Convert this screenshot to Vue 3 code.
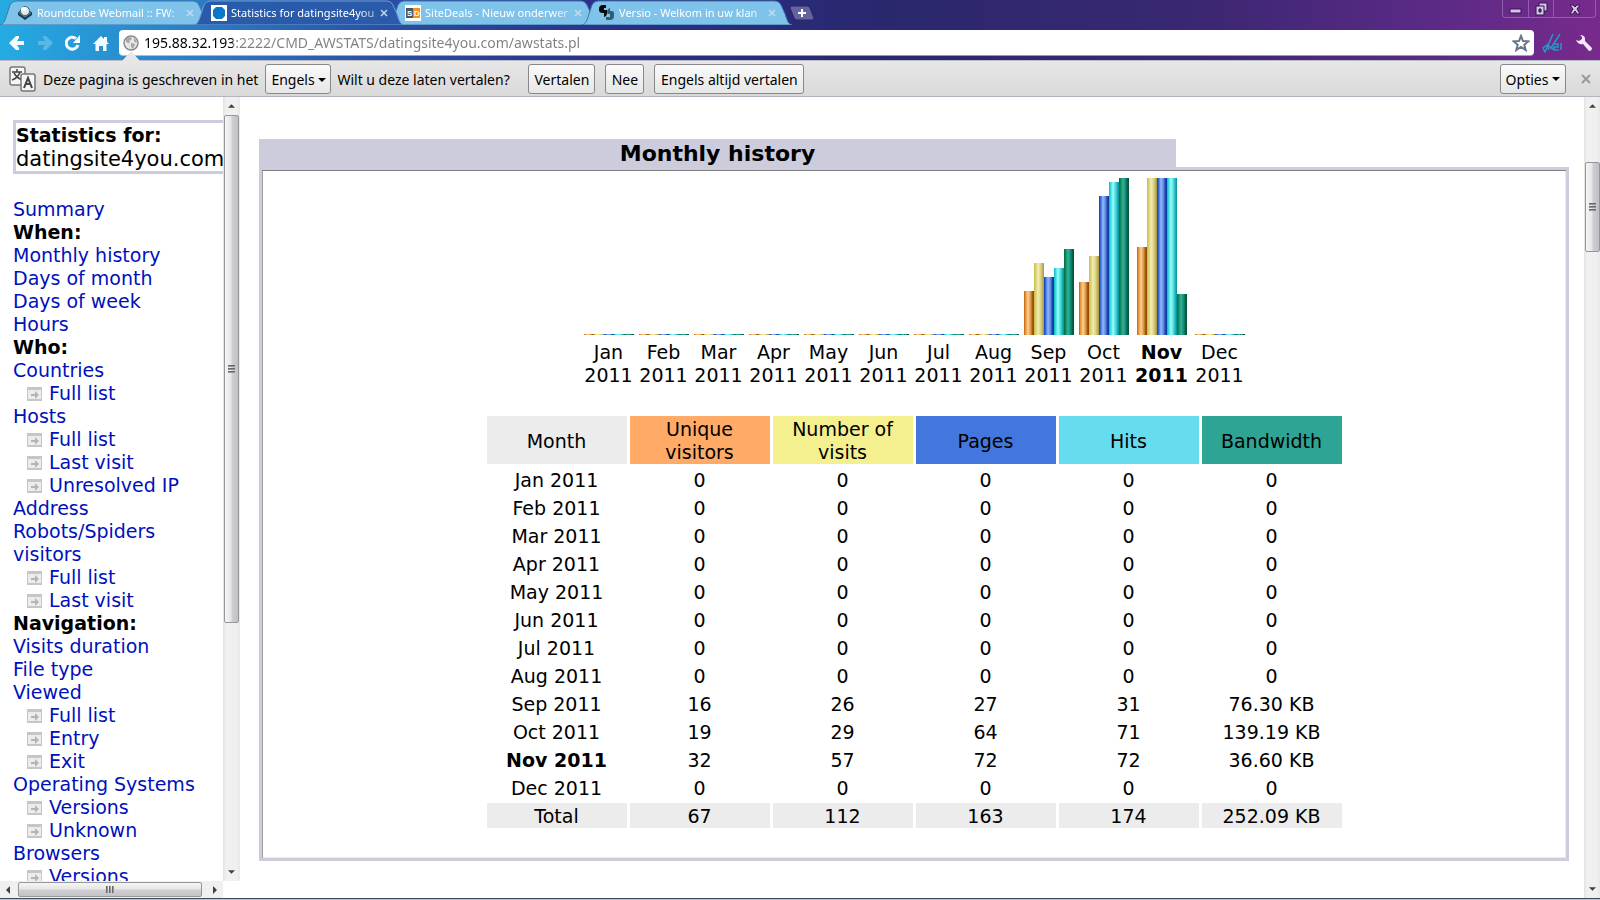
<script setup>
const tabs = [
  { title: 'Roundcube Webmail :: FW:', icon: 'cube' },
  { title: 'Statistics for datingsite4you', icon: 'dot', active: true },
  { title: 'SiteDeals - Nieuw onderwer', icon: 'sd' },
  { title: 'Versio - Welkom in uw klan', icon: 'versio' },
]

const menu = [
  { text: 'Summary' },
  { text: 'When:', head: true },
  { text: 'Monthly history' },
  { text: 'Days of month' },
  { text: 'Days of week' },
  { text: 'Hours' },
  { text: 'Who:', head: true },
  { text: 'Countries' },
  { text: 'Full list', sub: true },
  { text: 'Hosts' },
  { text: 'Full list', sub: true },
  { text: 'Last visit', sub: true },
  { text: 'Unresolved IP Address', sub: true },
  { text: 'Robots/Spiders visitors' },
  { text: 'Full list', sub: true },
  { text: 'Last visit', sub: true },
  { text: 'Navigation:', head: true },
  { text: 'Visits duration' },
  { text: 'File type' },
  { text: 'Viewed' },
  { text: 'Full list', sub: true },
  { text: 'Entry', sub: true },
  { text: 'Exit', sub: true },
  { text: 'Operating Systems' },
  { text: 'Versions', sub: true },
  { text: 'Unknown', sub: true },
  { text: 'Browsers' },
  { text: 'Versions', sub: true },
]

const empty = [0, 0, 0, 0, 0]
const none = [1, 1, 1, 1, 1]
const months = [
  ...['Jan', 'Feb', 'Mar', 'Apr', 'May', 'Jun', 'Jul', 'Aug'].map((name) => ({ name, values: empty, bars: none })),
  { name: 'Sep', values: [16, 26, 27, 31, '76.30 KB'], bars: [44, 72, 58, 67, 86] },
  { name: 'Oct', values: [19, 29, 64, 71, '139.19 KB'], bars: [53, 79, 139, 153, 157] },
  { name: 'Nov', values: [32, 57, 72, 72, '36.60 KB'], bars: [88, 157, 157, 157, 41], current: true },
  { name: 'Dec', values: empty, bars: none },
]
const series = ['visitors', 'visits', 'pages', 'hits', 'bandwidth']
const labels = ['Unique visitors', 'Number of visits', 'Pages', 'Hits', 'Bandwidth']
const totals = [67, 112, 163, 174, '252.09 KB']
</script>

<template>
  <div class="window">
    <header class="chrome">
      <div class="tabstrip">
        <div v-for="tab in tabs" :key="tab.title" class="tab" :class="{ active: tab.active }">
          <svg class="tab-shape" viewBox="0 0 210 25" preserveAspectRatio="none" aria-hidden="true">
            <path d="M0 25C4 24 5 20 7 14L10 5Q12 1 16 1H193Q197 1 199 5L203 14C205 20 206 24 210 25Z" />
          </svg>
          <svg v-if="tab.icon === 'cube'" class="favicon" viewBox="0 0 16 16" aria-hidden="true">
            <path d="M1 8L8 13L15 8V10L8 15L1 10Z" fill="#173a4c" />
            <path d="M1 8L5 5H11L15 8L8 13Z" fill="#4f7f9b" stroke="#1d3d50" />
            <circle cx="8" cy="6" r="4.500" fill="#e4ebef" stroke="#456678" />
            <ellipse cx="7" cy="4" rx="3" ry="2" fill="#fff" />
          </svg>
          <svg v-else-if="tab.icon === 'dot'" class="favicon" viewBox="0 0 16 16" aria-hidden="true">
            <path d="M0 0H16V16H0Z" fill="#fff" />
            <path d="M5 2H11L14 5V11L11 14H5L2 11V5Z" fill="#0878c6" />
          </svg>
          <svg v-else-if="tab.icon === 'sd'" class="favicon" viewBox="0 0 16 16" aria-hidden="true">
            <path d="M0 0H16V16H0Z" fill="#fff" />
            <path d="M1 3H8V13H1Z" fill="#44586c" />
            <path d="M8 3H15V13H8Z" fill="#f7920f" />
            <text x="2" y="11" class="sd">S</text>
            <text x="9" y="11" class="sd">D</text>
          </svg>
          <svg v-else class="favicon" viewBox="0 0 16 16" aria-hidden="true">
            <path d="M7 0H4Q0 0 0 4V5Q0 8 4 8H5V12Q8 11 8 8V5H5V3H7Z" fill="#080a0c" />
            <path d="M11 3Q8 4 8 7Q8 9 10 9H11V12H7V15H11Q15 15 15 11V8Q15 6 12 6H11Z" fill="#2b6170" />
          </svg>
          <a href="#" class="tab-title">{{ tab.title }}</a>
          <button class="tab-close" aria-label="Tabblad sluiten">
            <svg viewBox="0 0 8 8" aria-hidden="true"><path d="M1 1L7 7M7 1L1 7" /></svg>
          </button>
        </div>
        <button class="new-tab" aria-label="Nieuw tabblad">
          <svg viewBox="0 0 26 16" aria-hidden="true">
            <path d="M2 1H18Q20 1 21 3L25 13Q25 15 23 15H8Q6 15 5 13L1 3Q1 1 2 1Z" fill="#6462a0" stroke="#28265f" />
            <path d="M9 8H17M13 4V12" stroke="#fff" stroke-width="2" />
          </svg>
        </button>
        <div class="controls">
          <button aria-label="Minimaliseren">
            <svg viewBox="0 0 14 14" aria-hidden="true"><path d="M1 7H12V11H1Z" fill="#d7c4e4" stroke="#311650" /></svg>
          </button>
          <button aria-label="Vorig formaat">
            <svg viewBox="0 0 14 14" aria-hidden="true">
              <path d="M5 1H13V9H5Z" fill="#d7c4e4" stroke="#311650" />
              <path d="M2 4H10V13H2Z" fill="#d7c4e4" stroke="#311650" />
              <path d="M5 7H7V10H5Z" fill="#5b2a82" stroke="#311650" />
            </svg>
          </button>
          <button class="wide" aria-label="Sluiten">
            <svg viewBox="0 0 14 14" aria-hidden="true">
              <path d="M2 3H5L7 5L9 3H12L9 7L12 12H9L7 9L5 12H2L5 7Z" fill="#d7c4e4" stroke="#311650" />
            </svg>
          </button>
        </div>
      </div>

      <div class="toolbar">
        <button class="tool" aria-label="Terug">
          <svg viewBox="0 0 16 16" aria-hidden="true"><path d="M7 1H10V3L8 6H15V10H8L10 13V15H7L0 8Z" fill="#f4fbff" /></svg>
        </button>
        <button class="tool faded" aria-label="Vooruit">
          <svg viewBox="0 0 16 16" aria-hidden="true"><path d="M9 1H6V3L8 6H1V10H8L6 13V15H9L16 8Z" fill="#f4fbff" /></svg>
        </button>
        <button class="tool" aria-label="Opnieuw laden">
          <svg viewBox="0 0 16 16" aria-hidden="true">
            <path d="M13 10A6 6 0 1 1 11 3.500" fill="none" stroke="#f4fbff" stroke-width="3" />
            <path d="M15 0V8H8Z" fill="#f4fbff" />
          </svg>
        </button>
        <button class="tool" aria-label="Startpagina">
          <svg viewBox="0 0 16 16" aria-hidden="true">
            <path d="M8 1L11 4V2H14V7L16 9H13.500V16H10V11H6V16H2.500V9H0Z" fill="#f4fbff" />
          </svg>
        </button>
        <div class="omnibox">
          <svg class="globe" viewBox="0 0 16 16" aria-hidden="true">
            <circle cx="8" cy="8" r="7" fill="#e6e6e6" stroke="#8b8b8b" stroke-width="1.500" />
            <path d="M3 4L6 2L9 3L8 5L6 6L7 8L5 8L3 7Z M8 8L12 9L11 12L9 14L8 11Z M11 3L14 6L13 8L11 6Z" fill="#a6a6a6" />
          </svg>
          <input type="text" class="url" aria-label="Adresbalk" value="195.88.32.193:2222/CMD_AWSTATS/datingsite4you.com/awstats.pl" />
          <button class="star" aria-label="Bladwijzer toevoegen">
            <svg viewBox="0 0 18 18" aria-hidden="true">
              <path d="M9 2L11 7L16.500 7.300L12.300 10.800L13.700 16L9 13L4.300 16L5.700 10.800L1.500 7.300L7 7Z" fill="#fff" stroke="#66748c" stroke-width="2" />
            </svg>
          </button>
        </div>
        <button class="tool signature" aria-label="Extensie">
          <svg viewBox="0 0 20 20" aria-hidden="true">
            <path d="M11 1L3 19L1 15L5 12L7 17M18 1L9 15L6 12M9 14L12 17M12 11H16V14H12V17H17M19 10V17" fill="none" stroke="#2e93c9" stroke-width="1.500" />
          </svg>
        </button>
        <button class="tool" aria-label="Instellingen">
          <svg viewBox="0 0 16 16" aria-hidden="true">
            <path d="M4 0Q8 0 9 3V6L16 13Q16 16 13 16L7 9Q2 10 0 5L3 6L6 4V2Z" fill="#f3e9f8" />
          </svg>
        </button>
      </div>
    </header>

    <section class="infobar" aria-label="Vertaalbalk">
      <svg class="pointer" viewBox="0 0 18 10" aria-hidden="true"><path d="M0 10L9 0L18 10Z" fill="#e7e7e7" /></svg>
      <svg class="translate" viewBox="0 0 27 27" aria-hidden="true">
        <rect x="1" y="1" width="15" height="18" rx="2" fill="#f5f5f5" stroke="#777" stroke-width="1.500" />
        <path d="M3 6H13M8 3V6M11 6Q9 12 3 14M5 7Q8 12 13 14" fill="none" stroke="#444" stroke-width="1.500" />
        <rect x="12" y="8" width="14" height="17" rx="2" fill="#f5f5f5" stroke="#777" stroke-width="1.500" />
        <path d="M15 22L19 12L23 22M16 18H22" fill="none" stroke="#444" stroke-width="2" />
      </svg>
      <label for="language">Deze pagina is geschreven in het</label>
      <span class="select">
        <select id="language"><option>Engels</option></select>
        <svg class="caret" viewBox="0 0 8 4" aria-hidden="true"><path d="M0 0H8L4 4Z" /></svg>
      </span>
      <span class="question">Wilt u deze laten vertalen?</span>
      <button class="btn b1">Vertalen</button>
      <button class="btn b2">Nee</button>
      <button class="btn b3">Engels altijd vertalen</button>
      <button class="btn options">Opties<svg class="caret-in" viewBox="0 0 8 4" aria-hidden="true"><path d="M0 0H8L4 4Z" /></svg></button>
      <button class="dismiss" aria-label="Balk sluiten">
        <svg viewBox="0 0 10 10" aria-hidden="true"><path d="M1 1L9 9M9 1L1 9" /></svg>
      </button>
    </section>

    <div class="frames">
      <div class="side-frame">
        <nav class="side" aria-label="Statistics">
          <div class="site">
            <strong>Statistics for:</strong>
            <span>datingsite4you.com</span>
          </div>
          <ul class="menu">
            <li v-for="(item, i) in menu" :key="i" :class="{ head: item.head }">
              <template v-if="item.head">{{ item.text }}</template>
              <template v-else>
                <svg v-if="item.sub" class="page" viewBox="0 0 15 14" aria-hidden="true">
                  <path d="M0 0H15V14H0Z" fill="#c6c6c6" />
                  <path d="M1 3H14V12H1Z" fill="#ececec" />
                  <path d="M4 7H8V4L12 8L8 12V9H4Z" fill="#b4b4b4" />
                </svg>
                <a href="#">{{ item.text }}</a>
              </template>
            </li>
          </ul>
        </nav>
        <div class="vbar side-v" aria-hidden="true">
          <svg class="arrow" viewBox="0 0 8 4"><path d="M0 4L4 0L8 4Z" /></svg>
          <div class="thumb"><i></i><i></i><i></i></div>
          <svg class="arrow" viewBox="0 0 8 4"><path d="M0 0L4 4L8 0Z" /></svg>
        </div>
        <div class="hbar" aria-hidden="true">
          <svg class="arrow-h" viewBox="0 0 4 8"><path d="M4 0L0 4L4 8Z" /></svg>
          <div class="thumb-h"><i></i><i></i><i></i></div>
          <svg class="arrow-h" viewBox="0 0 4 8"><path d="M0 0L4 4L0 8Z" /></svg>
        </div>
      </div>

      <main class="main">
        <h1>Monthly history</h1>
        <div class="panel">
          <div class="chart">
            <div v-for="m in months" :key="m.name" class="month" :class="{ current: m.current }">
              <div class="bars">
                <div v-for="(h, i) in m.bars" :key="i" class="bar" :class="series[i]" :style="{ height: h + 'px' }"></div>
              </div>
              <div class="label">{{ m.name }}<br />2011</div>
            </div>
          </div>
          <table>
            <thead>
              <tr>
                <th scope="col" class="plain">Month</th>
                <th v-for="(l, i) in labels" :key="l" scope="col" :class="'h-' + series[i]">{{ l }}</th>
              </tr>
            </thead>
            <tbody>
              <tr v-for="m in months" :key="m.name">
                <th scope="row" :class="{ current: m.current }">{{ m.name }} 2011</th>
                <td v-for="(v, i) in m.values" :key="i">{{ v }}</td>
              </tr>
            </tbody>
            <tfoot>
              <tr>
                <th scope="row">Total</th>
                <td v-for="t in totals" :key="t">{{ t }}</td>
              </tr>
            </tfoot>
          </table>
        </div>
      </main>
      <div class="vbar main-v" aria-hidden="true">
        <svg class="arrow" viewBox="0 0 8 4"><path d="M0 4L4 0L8 4Z" /></svg>
        <div class="thumb"><i></i><i></i><i></i></div>
        <svg class="arrow" viewBox="0 0 8 4"><path d="M0 0L4 4L8 0Z" /></svg>
      </div>
    </div>
    <div class="edge"></div>
  </div>
</template>

<style>
body {
  margin: 0;
}
</style>

<style scoped>
.window {
  height: 100vh;
  display: flex;
  flex-direction: column;
  overflow: hidden;
  background: #fff;
  color: #000;
  font-family: 'Noto Sans', 'Open Sans', sans-serif;
}
button {
  font: inherit;
  color: inherit;
  border: 0;
  padding: 0;
  background: none;
  display: flex;
  align-items: center;
  justify-content: center;
}
svg {
  display: block;
  flex: none;
}

/* browser chrome */
.chrome {
  flex: none;
  background: linear-gradient(90deg, #25abe3 0%, #2a82c8 11%, #2a50a3 24%, #2b3088 38%, #29286f 55%, #3b2773 75%, #5c2a86 90%, #782a8c 100%);
}
.tabstrip {
  display: flex;
  height: 25px;
}
.tab {
  position: relative;
  width: 194px;
  box-sizing: border-box;
  padding-left: 17px;
  display: flex;
  align-items: center;
  color: #fff;
}
.tab-shape {
  position: absolute;
  left: 0;
  top: 0;
  width: 210px;
  height: 25px;
  fill: #7fc3ea;
  stroke: #3f76ab;
}
.tab.active {
  z-index: 1;
}
.tab.active .tab-shape {
  fill: #2a5bab;
  stroke: #6f9dd3;
}
.favicon {
  position: relative;
  width: 16px;
  height: 16px;
}
.sd {
  font: bold 8px 'Liberation Sans', sans-serif;
  fill: #fff;
}
.tab-title {
  position: relative;
  margin-left: 4px;
  width: 150px;
  white-space: nowrap;
  font-size: 11px;
  line-height: 20px;
  color: #fff;
  text-decoration: none;
  mask-image: linear-gradient(90deg, #000 85%, #0006);
}
.tab-close {
  position: relative;
}
.tab-close svg {
  width: 8px;
  height: 8px;
  stroke: #c3dcee;
  stroke-width: 1.5;
}
.new-tab {
  margin-left: 13px;
}
.new-tab svg {
  width: 26px;
  height: 16px;
}
.controls {
  margin-left: auto;
  margin-right: 4px;
  display: flex;
  height: 17px;
  border: 1px solid #8d5fae;
  border-top: 0;
  border-radius: 0 0 4px 4px;
}
.controls button {
  width: 25px;
}
.controls button + button {
  border-left: 1px solid #8d5fae;
}
.controls button.wide {
  width: 42px;
}
.controls svg {
  width: 14px;
  height: 14px;
}
.toolbar {
  display: flex;
  align-items: center;
  gap: 12px;
  height: 35px;
  padding: 0 8px 0 9px;
}
.tool svg {
  width: 16px;
  height: 16px;
}
.tool.faded {
  opacity: 0.25;
}
.tool.signature {
  margin-right: 2px;
}
.tool.signature svg {
  width: 20px;
  height: 20px;
}
.omnibox {
  flex: 1;
  display: flex;
  align-items: center;
  height: 25px;
  margin: 0 -4px 0 -2px;
  padding: 0 4px;
  background: #fff;
  border-radius: 4px;
  box-shadow: 0 1px 0 #ffffff80;
}
.globe {
  width: 16px;
  height: 16px;
}
.url {
  flex: 1;
  min-width: 0;
  border: 0;
  padding: 0;
  margin-left: 5px;
  height: 24px;
  outline: 0;
  font: 14px 'Noto Sans', sans-serif;
  color: transparent;
  background: linear-gradient(90deg, #000 89px, #808080 89px);
  background-clip: text;
}
.star svg {
  width: 18px;
  height: 18px;
}

/* translate bar */
.infobar {
  position: relative;
  flex: none;
  display: flex;
  align-items: center;
  height: 37px;
  box-sizing: border-box;
  padding: 1px 9px 0;
  background: linear-gradient(#e7e7e7, #d9d9d9);
  border-top: 1px solid #b7bac6;
  border-bottom: 1px solid #b4b4bc;
  font-size: 14px;
  white-space: nowrap;
}
.pointer {
  position: absolute;
  left: 122px;
  top: -10px;
  width: 18px;
  height: 10px;
}
.translate {
  width: 27px;
  height: 27px;
  margin-right: 7px;
}
.select {
  position: relative;
  margin: 0 6px 0 7px;
}
select {
  appearance: none;
  display: block;
  width: 66px;
  height: 30px;
  padding: 0 5px;
  font: inherit;
  color: #000;
  border: 1px solid #888;
  border-radius: 3px;
  background: linear-gradient(#fafafa, #e6e6e6);
}
.caret {
  position: absolute;
  right: 5px;
  top: 14px;
  width: 8px;
  height: 4px;
}
.caret-in {
  width: 8px;
  height: 4px;
  margin-left: 4px;
}
.question {
  width: 176px;
  margin-right: 15px;
}
.btn {
  height: 30px;
  box-sizing: border-box;
  border: 1px solid #888;
  border-radius: 3px;
  background: linear-gradient(#fafafa, #e6e6e6);
}
.b1 {
  width: 67px;
}
.b2 {
  width: 39px;
  margin: 0 10px;
}
.b3 {
  width: 150px;
}
.options {
  width: 66px;
  margin-left: auto;
}
.dismiss {
  margin-left: 15px;
}
.dismiss svg {
  width: 10px;
  height: 10px;
  stroke: #9a9a9a;
  stroke-width: 2;
}

/* frames */
.frames {
  flex: 1;
  min-height: 0;
  display: grid;
  grid-template-columns: 240px 1fr 16px;
  font-family: 'DejaVu Sans', sans-serif;
  font-size: 19px;
  line-height: 23px;
}
.side-frame {
  min-height: 0;
  display: grid;
  grid-template-columns: 223px 17px;
  grid-template-rows: minmax(0, 1fr) 17px;
}
.side {
  overflow: hidden;
  padding: 23px 0 0 13px;
}
.site {
  border: 3px solid #ccccdd;
  border-right: 0;
  height: 48px;
  line-height: 24px;
  white-space: nowrap;
}
.site strong,
.site span {
  display: block;
}
.site span {
  font-size: 21px;
}
.menu {
  list-style: none;
  margin: 24px 0 0;
  padding: 0 20px 0 0;
}
.menu .head {
  font-weight: bold;
}
.menu a {
  color: #0011bb;
  text-decoration: none;
}
.page {
  display: inline-block;
  width: 15px;
  height: 14px;
  margin: 0 7px 0 14px;
  vertical-align: -1px;
}
.vbar {
  display: flex;
  flex-direction: column;
  align-items: center;
  box-sizing: border-box;
  background: linear-gradient(90deg, #e3e3e3, #f0f0f0 20%, #f0f0f0 80%, #e8e8e8);
  padding: 7px 0;
}
.arrow {
  width: 7px;
  height: 4px;
  fill: #404040;
}
.thumb {
  width: 15px;
  box-sizing: border-box;
  border: 1px solid #979797;
  border-radius: 2px;
  background: linear-gradient(90deg, #f5f5f5, #e6e6ea 45%, #cfcfd2 55%, #bfbfc5);
  display: flex;
  flex-direction: column;
  align-items: center;
  justify-content: center;
  gap: 1px;
  margin-bottom: auto;
}
.thumb i {
  width: 7px;
  height: 2px;
  background: linear-gradient(#555, #aaa);
}
.side-v .thumb {
  height: 66%;
  margin-top: 7px;
}
.main-v .thumb {
  height: 90px;
  margin-top: 54px;
}
.hbar {
  width: 223px;
  display: flex;
  align-items: center;
  box-sizing: border-box;
  padding: 0 6px;
  background: #f0f0f0;
}
.arrow-h {
  width: 4px;
  height: 8px;
  fill: #404040;
}
.thumb-h {
  width: 184px;
  height: 15px;
  box-sizing: border-box;
  margin: 0 auto 0 8px;
  border: 1px solid #979797;
  border-radius: 2px;
  background: linear-gradient(#f5f5f5, #e6e6e6 45%, #cfcfd2 55%, #c4c4c8);
  display: flex;
  align-items: center;
  justify-content: center;
  gap: 1px;
}
.thumb-h i {
  width: 2px;
  height: 7px;
  background: linear-gradient(90deg, #555, #aaa);
}

/* report */
.main {
  min-width: 0;
  overflow: hidden;
  padding: 42px 15px 0 19px;
}
h1 {
  width: 70%;
  box-sizing: border-box;
  margin: 0;
  padding-top: 2px;
  background: #ccccdd;
  font-size: 22px;
  line-height: 26px;
  text-align: center;
}
.panel {
  border: 3px solid #ccccdd;
  box-shadow: inset 0 1px #808080, inset 1px 0 #a0a0a0, inset -1px -1px #ececec;
  padding: 8px 0 27px;
  text-align: center;
}
.chart {
  display: flex;
  justify-content: center;
  gap: 5px;
}
.month {
  width: 50px;
}
.month.current {
  width: 56px;
  font-weight: bold;
}
.bars {
  display: flex;
  align-items: flex-end;
  justify-content: center;
  height: 157px;
}
.bar {
  width: 10px;
}
.visitors {
  background: linear-gradient(90deg, #b8640c, #e8923a 15%, #ffcf92 40%, #d89c50 65%, #a85a08 85%, #8c4400);
}
.visits {
  background: linear-gradient(90deg, #c8bc50, #dcd27a 20%, #f4eeb0 40%, #dcd48c 65%, #b8aa50 90%, #a89838);
}
.pages {
  background: linear-gradient(90deg, #0c40b0, #4676e0 20%, #98b8ff 40%, #5c88e0 65%, #1448a8 85%, #0838a0);
}
.hits {
  background: linear-gradient(90deg, #10b8c0, #48e0e4 20%, #98ffff 40%, #50d8dc 65%, #10a4ac 90%, #089098);
}
.bandwidth {
  background: linear-gradient(90deg, #006838, #10946c 20%, #38b098 40%, #109078 65%, #086048 85%, #005030);
}
.label {
  margin-top: 6px;
}
table {
  margin: 26px auto 0;
  border-collapse: separate;
  border-spacing: 3px;
}
th,
td {
  width: 140px;
  box-sizing: border-box;
  padding: 2px 0 0;
  white-space: nowrap;
  font-weight: normal;
}
thead th {
  padding: 2px 16px 0;
  white-space: normal;
}
.plain,
tfoot th,
tfoot td {
  background: #ececec;
}
.h-visitors {
  background: #ffaa66;
}
.h-visits {
  background: #f4f090;
}
.h-pages {
  background: #4477dd;
}
.h-hits {
  background: #66ddee;
}
.h-bandwidth {
  background: #2ea495;
}
th.current {
  font-weight: bold;
}
.edge {
  flex: none;
  height: 1px;
  background: #b0c6d8;
  border-top: 1px solid #3c4c5c;
}
</style>
